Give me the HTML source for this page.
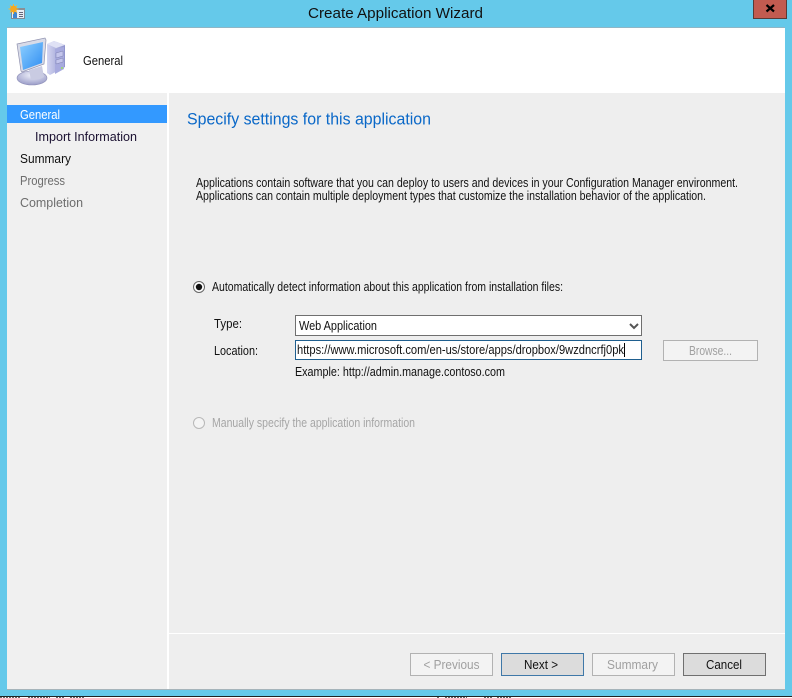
<!DOCTYPE html>
<html><head><meta charset="utf-8"><style>
html,body{margin:0;padding:0;width:792px;height:698px;overflow:hidden;background:#65c9ea}
svg{display:block}
text{font-family:"Liberation Sans",sans-serif;font-size:13px;fill:#111}
</style></head><body>
<svg width="792" height="698" viewBox="0 0 792 698" xmlns="http://www.w3.org/2000/svg">
<defs>
<linearGradient id="scr" x1="0" y1="0" x2="1" y2="1"><stop offset="0" stop-color="#8fd0ff"/><stop offset="1" stop-color="#2f8df2"/></linearGradient>
<linearGradient id="tw" x1="0" y1="0" x2="1" y2="0"><stop offset="0" stop-color="#d4d6f2"/><stop offset="1" stop-color="#8f93cc"/></linearGradient>
<radialGradient id="base" cx=".5" cy=".3" r=".7"><stop offset="0" stop-color="#eef0fa"/><stop offset="1" stop-color="#9a9cc8"/></radialGradient>
</defs>
<rect width="792" height="698" fill="#65c9ea"/>
<!-- title bar icon -->
<rect x="11.500" y="8.500" width="13" height="10" fill="#e8eef5" stroke="#808a94"/>
<rect x="11" y="8" width="14" height="2" fill="#8a8f96"/>
<rect x="13" y="12" width="4" height="6" fill="#3f86d0"/>
<rect x="19" y="12" width="4" height="1" fill="#667"/><rect x="19" y="14" width="4" height="1" fill="#667"/><rect x="19" y="16" width="4" height="1" fill="#667"/>
<path d="M13.500 4v10M8.500 9h10M10 5.500l7 7M17 5.500l-7 7" stroke="#f7b733" stroke-width="1"/>
<circle cx="13.500" cy="9" r="3.400" fill="#f5a81f"/>
<text x="308" y="18" textLength="175" lengthAdjust="spacingAndGlyphs" style="font-size:15px">Create Application Wizard</text>
<!-- close -->
<rect x="753.500" y="-1" width="33" height="19.500" fill="#c25b50" stroke="#5a3a36"/>
<path d="M766.500 5l7.500 6.500M774 5l-7.500 6.500" stroke="#000" stroke-width="2.200"/>
<!-- window -->
<rect x="7" y="27" width="778" height="1" fill="#8fb6c6"/>
<rect x="7" y="28" width="778" height="661" fill="#fff"/>
<rect x="7" y="93" width="160" height="596" fill="#f0f0f0"/>
<rect x="169" y="93" width="616" height="596" fill="#eeeeee"/>
<rect x="169" y="633" width="616" height="1" fill="#fff"/>
<rect x="0" y="689" width="792" height="1" fill="#a6b4ba"/>
<rect x="0" y="689" width="7" height="1" fill="#65c9ea"/><rect x="785" y="689" width="7" height="1" fill="#65c9ea"/>
<!-- computer icon -->
<g>
<path d="M47 44l7-3 11 4v22l-15 8-3-2z" fill="url(#tw)"/>
<path d="M47 44l7-3 11 4-9 3z" fill="#dfe1f5"/>
<path d="M55 49l9-2v22l-9 5z" fill="#a7aade"/>
<path d="M56 53l7-2v5l-7 2zM56 60l7-2v4l-7 2z" fill="#c3c5ec" stroke="#7d80b0" stroke-width=".5"/>
<circle cx="62" cy="68" r="1" fill="#9adf60"/>
<ellipse cx="32" cy="78" rx="15" ry="7" fill="url(#base)" stroke="#8f90b8" stroke-width=".6"/>
<path d="M29 70l13-4 2 11-4 2-9 1z" fill="#c9cbe2"/>
<path d="M17 44l28-6 1 2-2 24-22 8-1-1z" fill="#d8dbe8" stroke="#9092b0" stroke-width=".7"/>
<path d="M20 47l23-5-1 21-19 7z" fill="url(#scr)"/>
</g>
<text x="83" y="65" textLength="40" lengthAdjust="spacingAndGlyphs">General</text>
<!-- nav -->
<rect x="7" y="105" width="160" height="18" fill="#3399ff"/>
<text x="20" y="119" textLength="40" lengthAdjust="spacingAndGlyphs" style="fill:#fff">General</text>
<text x="35" y="141" textLength="102" lengthAdjust="spacingAndGlyphs" style="fill:#1a1030">Import Information</text>
<text x="20" y="163" textLength="51" lengthAdjust="spacingAndGlyphs">Summary</text>
<text x="20" y="185" textLength="45" lengthAdjust="spacingAndGlyphs" style="fill:#6d6d6d">Progress</text>
<text x="20" y="207" textLength="63" lengthAdjust="spacingAndGlyphs" style="fill:#6d6d6d">Completion</text>
<!-- heading -->
<text x="187" y="124.500" textLength="244" lengthAdjust="spacingAndGlyphs" style="font-size:17px;fill:#0a68c8">Specify settings for this application</text>
<text x="196" y="187" textLength="542" lengthAdjust="spacingAndGlyphs">Applications contain software that you can deploy to users and devices in your Configuration Manager environment.</text>
<text x="196" y="200" textLength="510" lengthAdjust="spacingAndGlyphs">Applications can contain multiple deployment types that customize the installation behavior of the application.</text>
<!-- radio 1 -->
<circle cx="199" cy="287" r="5.500" fill="#fff" stroke="#666"/>
<circle cx="199" cy="287" r="3.200" fill="#111"/>
<text x="212" y="291" textLength="351" lengthAdjust="spacingAndGlyphs">Automatically detect information about this application from installation files:</text>
<text x="214" y="328" textLength="28" lengthAdjust="spacingAndGlyphs">Type:</text>
<text x="214" y="355" textLength="44" lengthAdjust="spacingAndGlyphs">Location:</text>
<!-- select -->
<rect x="295.500" y="315.500" width="346" height="20" fill="#fff" stroke="#6f6f6f"/>
<text x="299" y="330" textLength="78" lengthAdjust="spacingAndGlyphs">Web Application</text>
<path d="M630 324l4 4 4-4" fill="none" stroke="#555" stroke-width="2"/>
<!-- input -->
<rect x="295.500" y="340.500" width="346" height="19" fill="#fff" stroke="#1f5f8f"/>
<text x="297" y="354" textLength="327" lengthAdjust="spacingAndGlyphs">https://www.microsoft.com/en-us/store/apps/dropbox/9wzdncrfj0pk</text>
<rect x="624" y="343" width="1" height="14" fill="#000"/>
<text x="295" y="376" textLength="210" lengthAdjust="spacingAndGlyphs">Example: http://admin.manage.contoso.com</text>
<!-- browse -->
<rect x="663.500" y="340.500" width="94" height="20" fill="#f3f3f3" stroke="#b2b2b2"/>
<text x="689" y="355" textLength="43" lengthAdjust="spacingAndGlyphs" style="fill:#a0a0a0">Browse...</text>
<!-- radio 2 -->
<circle cx="199" cy="423" r="5.500" fill="#f4f4f4" stroke="#b8b8b8"/>
<text x="212" y="427" textLength="203" lengthAdjust="spacingAndGlyphs" style="fill:#a6a6a6">Manually specify the application information</text>
<!-- buttons -->
<rect x="410.500" y="653.500" width="82" height="22" fill="#f3f3f3" stroke="#b2b2b2"/>
<text x="423.500" y="669" textLength="56" lengthAdjust="spacingAndGlyphs" style="fill:#a0a0a0">&lt; Previous</text>
<rect x="501.500" y="653.500" width="82" height="22" fill="#dcdcdc" stroke="#3f78a8"/>
<text x="524" y="669" textLength="34" lengthAdjust="spacingAndGlyphs">Next &gt;</text>
<rect x="592.500" y="653.500" width="82" height="22" fill="#f3f3f3" stroke="#b2b2b2"/>
<text x="607" y="669" textLength="51" lengthAdjust="spacingAndGlyphs" style="fill:#a0a0a0">Summary</text>
<rect x="683.500" y="653.500" width="82" height="22" fill="#dcdcdc" stroke="#707070"/>
<text x="706" y="669" textLength="36" lengthAdjust="spacingAndGlyphs">Cancel</text>
<!-- bottom edge -->
<rect x="0" y="696" width="792" height="2" fill="#fff"/>
<rect x="0" y="696" width="792" height="1" fill="#222"/>
<path d="M0 697.500h21M28 697.500h22M56 697.500h8M70 697.500h14M437 697.500h3M445 697.500h22M484 697.500h8M497 697.500h14" stroke="#666" stroke-width="1" stroke-dasharray="2 1"/>
</svg>
</body></html>
